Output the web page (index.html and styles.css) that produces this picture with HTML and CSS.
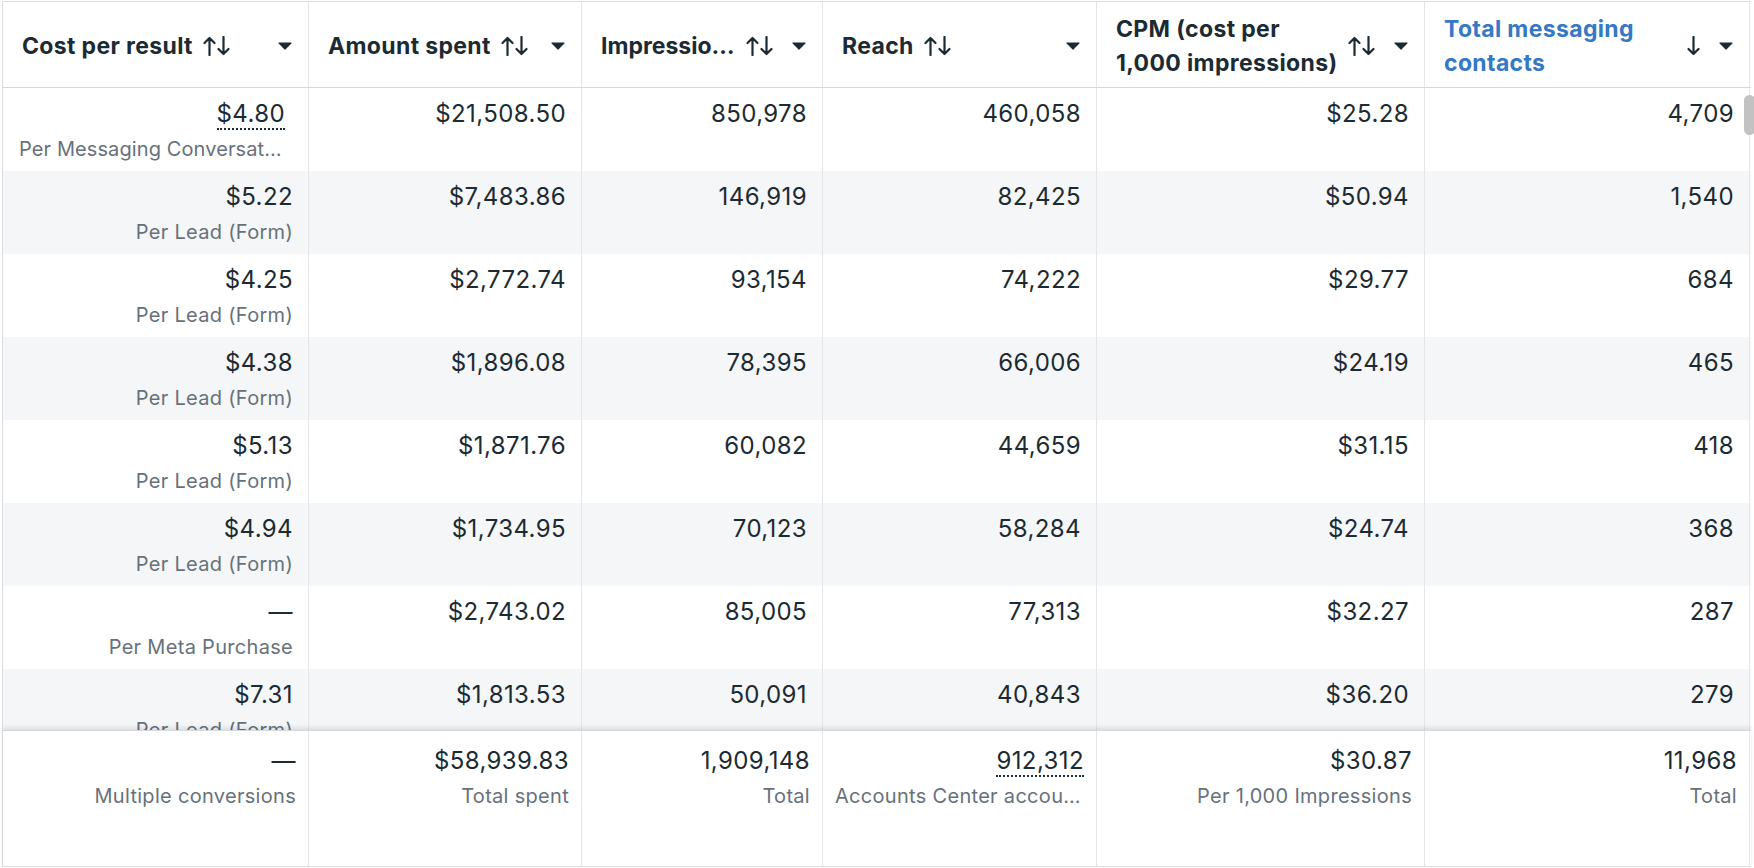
FILE: index.html
```html
<!DOCTYPE html>
<html lang="en">
<head>
<meta charset="utf-8">
<title>Ads report</title>
<link rel="stylesheet" href="styles.css">
</head>
<body>
<div class="table">
  <div class="head">
    <div class="hcell">
      <span class="label">Cost per result</span>
      <svg class="sort" viewBox="0 0 27 20"><path d="M6.5 19V2M1.5 7l5-5 5 5M20.5 1v17M15.5 13l5 5 5-5"/></svg>
      <span class="spacer"></span>
      <svg class="caret" viewBox="0 0 14 8"><path d="M1 1h12l-6 6z"/></svg>
    </div>
    <div class="hcell">
      <span class="label">Amount spent</span>
      <svg class="sort" viewBox="0 0 27 20"><path d="M6.5 19V2M1.5 7l5-5 5 5M20.5 1v17M15.5 13l5 5 5-5"/></svg>
      <span class="spacer"></span>
      <svg class="caret" viewBox="0 0 14 8"><path d="M1 1h12l-6 6z"/></svg>
    </div>
    <div class="hcell">
      <span class="label ellipsis">Impressions</span>
      <svg class="sort" viewBox="0 0 27 20"><path d="M6.5 19V2M1.5 7l5-5 5 5M20.5 1v17M15.5 13l5 5 5-5"/></svg>
      <span class="spacer"></span>
      <svg class="caret" viewBox="0 0 14 8"><path d="M1 1h12l-6 6z"/></svg>
    </div>
    <div class="hcell">
      <span class="label">Reach</span>
      <svg class="sort" viewBox="0 0 27 20"><path d="M6.5 19V2M1.5 7l5-5 5 5M20.5 1v17M15.5 13l5 5 5-5"/></svg>
      <span class="spacer"></span>
      <svg class="caret" viewBox="0 0 14 8"><path d="M1 1h12l-6 6z"/></svg>
    </div>
    <div class="hcell">
      <span class="label">CPM (cost per 1,000 impressions)</span>
      <svg class="sort" viewBox="0 0 27 20"><path d="M6.5 19V2M1.5 7l5-5 5 5M20.5 1v17M15.5 13l5 5 5-5"/></svg>
      <span class="spacer"></span>
      <svg class="caret" viewBox="0 0 14 8"><path d="M1 1h12l-6 6z"/></svg>
    </div>
    <div class="hcell">
      <span class="label active">Total messaging contacts</span>
      <svg class="sort" viewBox="0 0 27 20"><path d="M20.5 1v17M15.5 13l5 5 5-5"/></svg>
      <span class="spacer"></span>
      <svg class="caret" viewBox="0 0 14 8"><path d="M1 1h12l-6 6z"/></svg>
    </div>
  </div>

  <div class="body">
    <div class="row">
      <div class="cell first"><div class="main"><span class="dotted">$4.80</span></div><div class="sub">Per Messaging Conversations Started</div></div>
      <div class="cell"><div class="main">$21,508.50</div></div>
      <div class="cell"><div class="main">850,978</div></div>
      <div class="cell"><div class="main">460,058</div></div>
      <div class="cell"><div class="main">$25.28</div></div>
      <div class="cell"><div class="main">4,709</div></div>
    </div>
    <div class="row alt">
      <div class="cell"><div class="main">$5.22</div><div class="sub">Per Lead (Form)</div></div>
      <div class="cell"><div class="main">$7,483.86</div></div>
      <div class="cell"><div class="main">146,919</div></div>
      <div class="cell"><div class="main">82,425</div></div>
      <div class="cell"><div class="main">$50.94</div></div>
      <div class="cell"><div class="main">1,540</div></div>
    </div>
    <div class="row">
      <div class="cell"><div class="main">$4.25</div><div class="sub">Per Lead (Form)</div></div>
      <div class="cell"><div class="main">$2,772.74</div></div>
      <div class="cell"><div class="main">93,154</div></div>
      <div class="cell"><div class="main">74,222</div></div>
      <div class="cell"><div class="main">$29.77</div></div>
      <div class="cell"><div class="main">684</div></div>
    </div>
    <div class="row alt">
      <div class="cell"><div class="main">$4.38</div><div class="sub">Per Lead (Form)</div></div>
      <div class="cell"><div class="main">$1,896.08</div></div>
      <div class="cell"><div class="main">78,395</div></div>
      <div class="cell"><div class="main">66,006</div></div>
      <div class="cell"><div class="main">$24.19</div></div>
      <div class="cell"><div class="main">465</div></div>
    </div>
    <div class="row">
      <div class="cell"><div class="main">$5.13</div><div class="sub">Per Lead (Form)</div></div>
      <div class="cell"><div class="main">$1,871.76</div></div>
      <div class="cell"><div class="main">60,082</div></div>
      <div class="cell"><div class="main">44,659</div></div>
      <div class="cell"><div class="main">$31.15</div></div>
      <div class="cell"><div class="main">418</div></div>
    </div>
    <div class="row alt">
      <div class="cell"><div class="main">$4.94</div><div class="sub">Per Lead (Form)</div></div>
      <div class="cell"><div class="main">$1,734.95</div></div>
      <div class="cell"><div class="main">70,123</div></div>
      <div class="cell"><div class="main">58,284</div></div>
      <div class="cell"><div class="main">$24.74</div></div>
      <div class="cell"><div class="main">368</div></div>
    </div>
    <div class="row">
      <div class="cell"><div class="main">—</div><div class="sub">Per Meta Purchase</div></div>
      <div class="cell"><div class="main">$2,743.02</div></div>
      <div class="cell"><div class="main">85,005</div></div>
      <div class="cell"><div class="main">77,313</div></div>
      <div class="cell"><div class="main">$32.27</div></div>
      <div class="cell"><div class="main">287</div></div>
    </div>
    <div class="row alt">
      <div class="cell"><div class="main">$7.31</div><div class="sub">Per Lead (Form)</div></div>
      <div class="cell"><div class="main">$1,813.53</div></div>
      <div class="cell"><div class="main">50,091</div></div>
      <div class="cell"><div class="main">40,843</div></div>
      <div class="cell"><div class="main">$36.20</div></div>
      <div class="cell"><div class="main">279</div></div>
    </div>
  </div>

  <div class="foot">
    <div class="fcell"><div class="main">—</div><div class="sub">Multiple conversions</div></div>
    <div class="fcell"><div class="main">$58,939.83</div><div class="sub">Total spent</div></div>
    <div class="fcell"><div class="main">1,909,148</div><div class="sub">Total</div></div>
    <div class="fcell"><div class="main"><span class="dotted">912,312</span></div><div class="sub">Accounts Center accounts</div></div>
    <div class="fcell"><div class="main">$30.87</div><div class="sub">Per 1,000 Impressions</div></div>
    <div class="fcell"><div class="main">11,968</div><div class="sub">Total</div></div>
  </div>

  <div class="thumb"></div>
</div>
</body>
</html>
```
FILE: styles.css
```css
html, body {
  margin: 0;
  padding: 0;
  background: #ffffff;
}

body {
  font-family: Inter, "Noto Sans", "Liberation Sans", sans-serif;
  color: #1c2b33;
  overflow: hidden;
}

.table {
  position: relative;
  margin: 1px 0 0 2px;
  width: 1748px;
  border-top: 1px solid #dadde1;
  border-left: 1px solid #dadde1;
}

.head,
.row,
.foot {
  display: grid;
  grid-template-columns: 306px 273px 241px 274px 328px 325px;
}

.head {
  height: 85px;
  border-bottom: 1px solid #d5d8dc;
}

.hcell {
  display: flex;
  align-items: center;
  padding: 2px 16px 0 19px;
  border-right: 1px solid #e3e5e8;
  min-width: 0;
}

.label {
  font-size: 23px;
  font-weight: 700;
  line-height: 34px;
  letter-spacing: 0.35px;
  min-width: 0;
  color: #1c2b33;
}

.label.active {
  color: #3578c4;
}

.label.ellipsis {
  letter-spacing: 0;
  white-space: nowrap;
  overflow: hidden;
  text-overflow: ellipsis;
}

.sort {
  flex: none;
  width: 27px;
  height: 20px;
  margin-left: 10px;
  fill: none;
  stroke: #1c2b33;
  stroke-width: 2.2;
  stroke-linecap: round;
  stroke-linejoin: round;
}

.spacer {
  flex: 1 1 0;
  min-width: 0;
}

.caret {
  flex: none;
  width: 14px;
  height: 8px;
  margin-left: 19px;
  fill: #1c2b33;
  stroke: #1c2b33;
  stroke-width: 1.2;
  stroke-linejoin: round;
}

.body {
  height: 642px;
  overflow: hidden;
}

.row {
  height: 83px;
}

.row.alt {
  background: #f5f6f7;
}

.cell {
  padding: 9px 15px 0 16px;
  text-align: right;
  border-right: 1px solid #e3e5e8;
  min-width: 0;
}

.cell.first {
  padding-right: 23px;
}

.main {
  font-size: 24px;
  line-height: 34px;
  letter-spacing: 0.4px;
  white-space: nowrap;
}

.sub {
  margin-top: 3px;
  font-size: 20px;
  line-height: 30px;
  letter-spacing: 0.3px;
  color: #67717b;
  white-space: nowrap;
  overflow: hidden;
  text-overflow: ellipsis;
}

.cell.first .sub {
  letter-spacing: 0.1px;
}

.dotted {
  border-bottom: 2px dotted #1c2b33;
}

.foot {
  position: relative;
  z-index: 1;
  height: 135px;
  background: #ffffff;
  border-top: 1px solid #d5d8dc;
  border-bottom: 1px solid #dadde1;
  box-shadow: 0 -3px 4px rgba(0, 0, 0, 0.09);
}

.fcell {
  padding: 13px 12px 0 12px;
  text-align: right;
  border-right: 1px solid #e3e5e8;
  min-width: 0;
}

.thumb {
  position: absolute;
  top: 93px;
  right: -4px;
  width: 11px;
  height: 40px;
  border-radius: 6px;
  background: #c2c2c2;
}
```
